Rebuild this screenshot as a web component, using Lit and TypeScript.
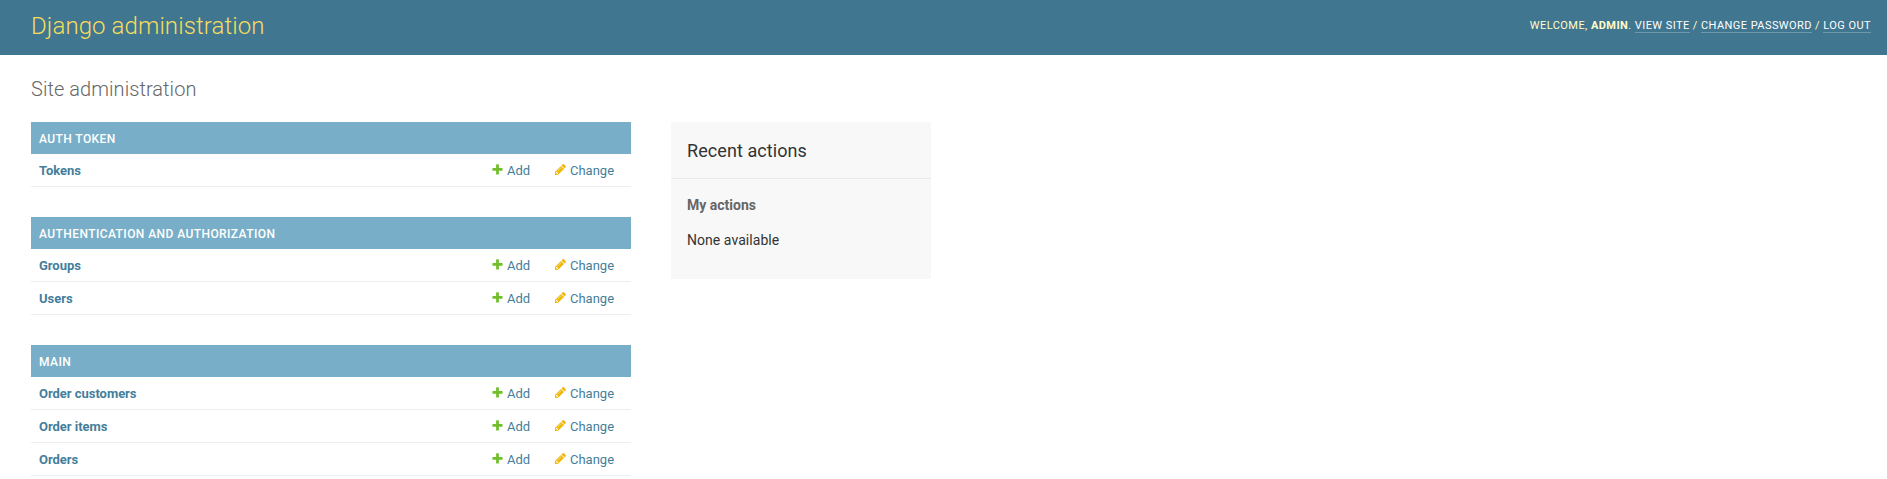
import { LitElement, html, css } from "lit";
import { customElement } from "lit/decorators.js";

const MODULES = [
  { name: "Auth Token", models: ["Tokens"] },
  { name: "Authentication and Authorization", models: ["Groups", "Users"] },
  { name: "Main", models: ["Order customers", "Order items", "Orders"] },
];

const PLUS =
  "M1600 796v192q0 40-28 68t-68 28h-416v416q0 40-28 68t-68 28h-192q-40 0-68-28t-28-68v-416h-416q-40 0-68-28t-28-68v-192q0-40 28-68t68-28h416v-416q0-40 28-68t68-28h192q40 0 68 28t28 68v416h416q40 0 68 28t28 68z";
const PENCIL =
  "M491 1536l91-91-235-235-91 91v107h128v128h107zm523-928q0-22-22-22-10 0-17 7l-542 542q-7 7-7 17 0 22 22 22 10 0 17-7l542-542q7-7 7-17zm-54-192l416 416-832 832h-416v-416zm683 96q0 53-37 90l-166 166-416-416 166-165q36-38 90-38 53 0 91 38l235 234q37 39 37 91z";

@customElement("app-root")
export class AppRoot extends LitElement {
  static styles = css`
    :host { display: block; height: 479px; overflow: hidden; background: #fff; color: #333; font: 14px Roboto, sans-serif; }
    * { box-sizing: border-box; }
    a { color: #447e9b; text-decoration: none; }
    .header { display: flex; justify-content: space-between; align-items: center; height: 55px; padding: 10px 16px 10px 31px; background: #417690; color: #ffc; }
    .brand { margin: 0 0 2px; font-size: 24px; font-weight: 300; line-height: 31px; letter-spacing: 0.1px; color: #f5dd5d; }
    .tools { margin-bottom: 4px; font-size: 11px; font-weight: 400; letter-spacing: 0.44px; text-transform: uppercase; }
    .tools a { color: #fff; border-bottom: 1px solid rgba(255, 255, 255, 0.25); }
    .tools strong { font-weight: 700; }
    .content { padding: 21px 31px; }
    .title { margin: 0 0 19px; font-size: 20px; line-height: 27px; letter-spacing: 0.06px; font-weight: 300; color: #666; }
    .columns { display: flex; align-items: flex-start; gap: 40px; }
    .main { width: 600px; }
    .module { margin-bottom: 30px; }
    .caption { height: 32px; padding: 9px 8px 7px; background: #79aec8; color: #fff; font-size: 12px; font-weight: 500; line-height: 16px; letter-spacing: 0.42px; text-transform: uppercase; }
    .row { display: flex; height: 33px; padding: 9px 8px 7px; border-bottom: 1px solid #eee; font-size: 13px; line-height: 16px; }
    .model { flex: 1; font-weight: 700; letter-spacing: -0.03px; }
    .add { width: 63px; display: flex; gap: 3px; }
    .change { width: 69px; display: flex; gap: 3px; }
    .icon { width: 13px; height: 13px; }
    .plus { fill: #70bf2b; }
    .pencil { fill: #efb80b; }
    .side { width: 260px; height: 157px; background: #f8f8f8; }
    .side h2 { margin: 0; padding: 16px; height: 57px; border-bottom: 1px solid #eaeaea; font-size: 18px; line-height: 25px; letter-spacing: 0.08px; font-weight: 400; }
    .side h3 { margin: 16px 16px 0; color: #666; font-size: 14px; line-height: 20px; }
    .side p { margin: 15px 16px; line-height: 20px; letter-spacing: 0.05px; }
  `;

  render() {
    return html`
      <header class="header">
        <h1 class="brand">Django administration</h1>
        <div class="tools">Welcome, <strong>admin</strong>. <a href="#">View site</a> / <a href="#">Change password</a> / <a href="#">Log out</a></div>
      </header>
      <main class="content">
        <h1 class="title">Site administration</h1>
        <div class="columns">
          <div class="main">
            ${MODULES.map((m) => html`<section class="module">
              <div class="caption">${m.name}</div>
              ${m.models.map((x) => html`<div class="row">
                <a class="model" href="#">${x}</a>
                <a class="add" href="#"><svg class="icon plus" viewBox="0 0 1792 1792"><path d=${PLUS} /></svg>Add</a>
                <a class="change" href="#"><svg class="icon pencil" viewBox="0 0 1792 1792"><path d=${PENCIL} /></svg>Change</a>
              </div>`)}
            </section>`)}
          </div>
          <aside class="side"><h2>Recent actions</h2><h3>My actions</h3><p>None available</p></aside>
        </div>
      </main>`;
  }
}
